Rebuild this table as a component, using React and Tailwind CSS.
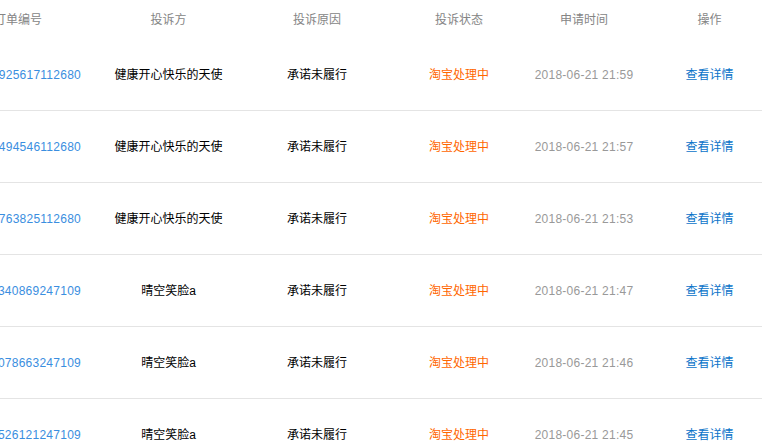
const rows = [
    { orderNo: '1799216925617112680', buyer: '健康开心快乐的天使', time: '2018-06-21 21:59' },
    { orderNo: '1799216494546112680', buyer: '健康开心快乐的天使', time: '2018-06-21 21:57' },
    { orderNo: '1799216763825112680', buyer: '健康开心快乐的天使', time: '2018-06-21 21:53' },
    { orderNo: '1798432340869247109', buyer: '晴空笑脸a', time: '2018-06-21 21:47' },
    { orderNo: '1798432078663247109', buyer: '晴空笑脸a', time: '2018-06-21 21:46' },
    { orderNo: '1798432526121247109', buyer: '晴空笑脸a', time: '2018-06-21 21:45' },
];

const cols = 'grid grid-cols-[184px_117px_180px_104px_146px_105px]';

const App = () => {
    return (
        <div className="w-[762px] h-[445px] overflow-hidden bg-white font-['Liberation_Sans','Noto_Sans_CJK_SC',sans-serif] text-[12px]">
            <div className="-ml-[74px] w-[836px]">
                {/* Header */}
                <div className={`${cols} h-[39px] items-center text-center text-[#858585]`}>
                    <div>订单编号</div>
                    <div>投诉方</div>
                    <div>投诉原因</div>
                    <div>投诉状态</div>
                    <div>申请时间</div>
                    <div>操作</div>
                </div>

                {/* Rows */}
                {rows.map((row) => (
                    <div
                        key={row.orderNo}
                        className={`${cols} h-[72px] items-center text-center border-b border-[#e4e4e4]`}
                    >
                        <div className="text-right pr-[29px] text-[#3a8ee0] tracking-[0.25px] whitespace-nowrap overflow-hidden">
                            {row.orderNo}
                        </div>
                        <div className="text-black whitespace-nowrap">{row.buyer}</div>
                        <div className="text-black">承诺未履行</div>
                        <div className="text-[#ff6600]">淘宝处理中</div>
                        <div className="text-[#999] tracking-[0.25px]">{row.time}</div>
                        <div>
                            <a href="#" className="text-[#0a73c9]">查看详情</a>
                        </div>
                    </div>
                ))}
            </div>
        </div>
    );
};

export default App;
